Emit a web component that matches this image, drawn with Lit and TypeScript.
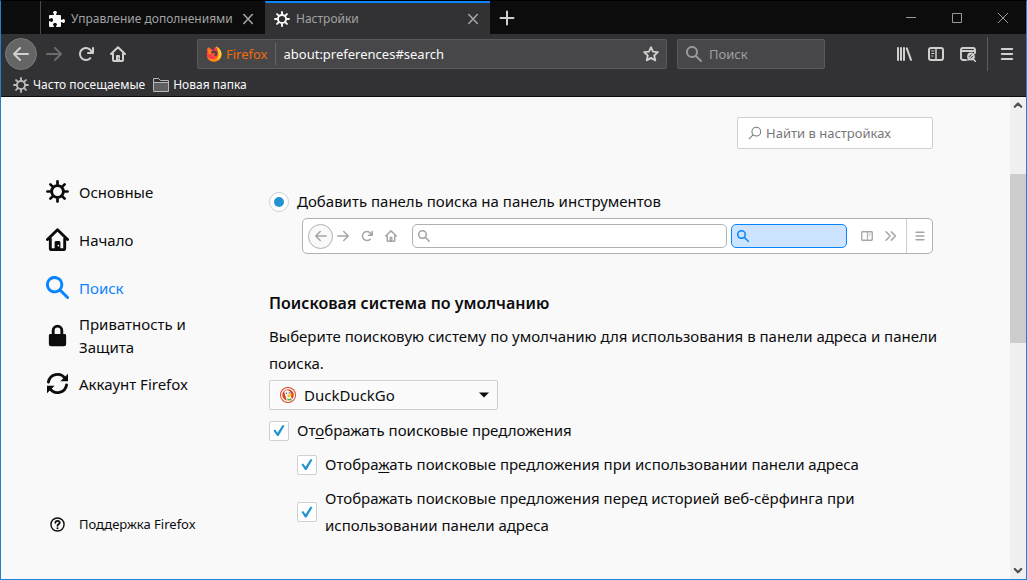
import { LitElement, html, css, svg, nothing } from "lit";
import { customElement, property, state } from "lit/decorators.js";

const line = (d: string, width = 2) => svg`<path d=${d} fill="none" stroke="currentColor"
  stroke-width=${width} stroke-linecap="round" stroke-linejoin="round"/>`;
const fill = (d: string) => svg`<path d=${d} fill="currentColor" fill-rule="evenodd"/>`;

const GLYPHS: Record<string, unknown> = {
  back: fill("M15 7H3.414l4.293-4.293a1 1 0 0 0-1.414-1.414l-6 6a1 1 0 0 0 0 1.414l6 6a1 1 0 0 0 1.414-1.414L3.414 9H15a1 1 0 0 0 0-2z"),
  forward: fill("M1 7h11.586L8.293 2.707a1 1 0 0 1 1.414-1.414l6 6a1 1 0 0 1 0 1.414l-6 6a1 1 0 0 1-1.414-1.414L12.586 9H1a1 1 0 0 1 0-2z"),
  reload: fill("M15 1a1 1 0 0 0-1 1v2.418A6.995 6.995 0 1 0 8 15a6.954 6.954 0 0 0 4.95-2.05 1 1 0 0 0-1.414-1.414A5.019 5.019 0 1 1 12.549 6H10a1 1 0 0 0 0 2h5a1 1 0 0 0 1-1V2a1 1 0 0 0-1-1z"),
  home: svg`${line("M1 8 8 1.2 15 8M3 7.5V14a1 1 0 0 0 1 1h8a1 1 0 0 0 1-1V7.500")}
    <path d="M6 15v-5a1 1 0 0 1 1-1h2a1 1 0 0 1 1 1v5z" fill="currentColor"/>
    <circle cx="8.600" cy="12.200" r=".6" class="hole"/>`,
  search: fill("M15.707 14.293l-4.822-4.822a6.019 6.019 0 1 0-1.414 1.414l4.822 4.822a1 1 0 0 0 1.414-1.414zM6 10a4 4 0 1 1 4-4 4 4 0 0 1-4 4z"),
  find: svg`<circle cx="9.500" cy="6.500" r="5" fill="none" stroke="currentColor" stroke-width="1.200"/>${line("M5.800 10.200 1.500 14.500", 1.2)}`,
  gear: svg`<circle cx="8" cy="8" r="4.100" fill="none" stroke="currentColor" stroke-width="2"/>
    ${line("M8 1v2M8 13v2M1 8h2M13 8h2M3.050 3.050l1.400 1.400M11.550 11.550l1.400 1.400M3.050 12.950l1.400-1.400M11.550 4.450l1.400-1.400", 1.9)}`,
  puzzle: fill("M14.5 8c-.971 0-1 1-1.750 1a.765.765 0 0 1-.75-.75V5a1 1 0 0 0-1-1H7.750A.765.765 0 0 1 7 3.250c0-.75 1-.779 1-1.750C8 .635 7.100 0 6 0S4 .635 4 1.500c0 .971 1 1 1 1.750a.765.765 0 0 1-.75.75H1a1 1 0 0 0-1 1v2.250A.765.765 0 0 0 .75 8c.75 0 .779-1 1.750-1C3.365 7 4 7.900 4 9s-.635 2-1.500 2c-.971 0-1-1-1.750-1a.765.765 0 0 0-.75.75V15a1 1 0 0 0 1 1h3.250a.765.765 0 0 0 .75-.75c0-.75-1-.779-1-1.750 0-.865.9-1.500 2-1.500s2 .635 2 1.500c0 .971-1 1-1 1.750a.765.765 0 0 0 .75.75H11a1 1 0 0 0 1-1v-3.250a.765.765 0 0 1 .75-.75c.75 0 .779 1 1.750 1 .865 0 1.500-.9 1.500-2s-.635-2-1.500-2z"),
  close: line("M3.800 3.500l8.500 9M12.300 3.500l-8.500 9", 1.6),
  plus: line("M8 1.500v13M1.500 8h13", 2),
  minimize: svg`<path d="M3 7.500h10" stroke="currentColor"/>`,
  maximize: svg`<path d="M3.500 3.500h9v9h-9z" fill="none" stroke="currentColor"/>`,
  quit: svg`<path d="M3 3l10 10M13 3 3 13" stroke="currentColor"/>`,
  star: line("M8 1.200l2 4.500 4.900.5-3.700 3.300 1.100 4.900L8 11.900l-4.300 2.500 1.100-4.900L1.100 6.200l4.900-.5z", 1.8),
  library: line("M2 2v12M5 2v12M8 2v12M10.800 2.400 15 13.800", 2),
  sidebar: svg`<rect x="1" y="2" width="14" height="12" rx="2" fill="none" stroke="currentColor" stroke-width="2"/>
    <path d="M8 2v12" stroke="currentColor" stroke-width="1.500"/><path d="M3.300 5h3M3.300 7.500h3M3.300 10h2" stroke="currentColor"/>`,
  panel: svg`<rect x="1" y="2.300" width="14" height="11.400" rx="1" fill="none" stroke="currentColor" stroke-width="1.800"/>
    <path d="M8.500 3v10" stroke="currentColor" stroke-width="1.400"/><path d="M10.300 5.500H13M10.300 7.800H12" stroke="currentColor"/>`,
  inspect: svg`${line("M6 14H3a2 2 0 0 1-2-2V4a2 2 0 0 1 2-2h10a2 2 0 0 1 2 2v3M1.500 5h13", 1.9)}
    <circle cx="11" cy="10.500" r="3.900" fill="currentColor"/>
    ${line("M8 14 10 12M13 13 15.300 15.300", 1.6)}
    <path d="M8.800 11 11.500 8.300M10.300 12.500 13 9.800" class="cut"/>`,
  menu: line("M2.800 3h10.400M2.800 8h10.400M2.800 13h10.400", 2),
  more: line("M1.500 2.500 7 8l-5.500 5.500M8.500 2.500 14 8l-5.500 5.500", 1.9),
  folder: svg`<path d="M.5 13.500v-12h5l2 2h8v11H.5zM.5 5.500h15" fill="none" stroke="currentColor"/>
    <path d="M1 6h14v8H1z" fill="currentColor" opacity=".35"/>`,
  lock: fill("M13 7h-1V4.500a4 4 0 0 0-8 0V7H3a1 1 0 0 0-1 1v6a1.500 1.500 0 0 0 1.500 1.500h9a1.500 1.500 0 0 0 1.500-1.500V8a1 1 0 0 0-1-1zM6 4.500a2 2 0 0 1 4 0V7H6z"),
  sync: svg`${line("M1.700 7a6.400 6.400 0 0 1 11.600-2.500M14.300 9a6.400 6.400 0 0 1-11.600 2.500", 2)}
    ${fill("M15.300 1.200v5.300H10zM.7 14.800V9.500H6z")}`,
  help: svg`<circle cx="8" cy="8" r="7" fill="none" stroke="currentColor" stroke-width="1.500"/>
    ${line("M5.800 6.200C5.800 3.300 10.300 3.400 10.300 6.100 10.300 7.800 8 7.700 8 9.400", 1.9)}<circle cx="8" cy="12" r="1.100" fill="currentColor"/>`,
  caret: fill("M3 5.500h10L8 10.500z"),
  up: line("M4.800 9.800 8 6.500l3.200 3.300", 2.2),
  down: line("M4.800 6 8 9.300 11.200 6", 2.2),
  firefox: svg`<circle cx="8" cy="8.300" r="7.300" fill="#ff3a4c"/>
    <path d="M10.300.3c1.800 1.200 5.300 4 5.200 8.400-.1 4-3.400 7-7.300 7C4 15.700 1.500 13 1 10c2 3 5 3.500 7.500 2.800C13 11.500 13.500 5.500 10.300.3z" fill="#ff8a16"/>
    <path d="M9.800.3c3 1.300 5.200 3.700 5.600 7.200.3 3.300-2 6-4.600 6.700C13.300 11 13.500 6 9.800.3z" fill="#ffd427"/>
    <path d="M1 3.500 2.300 1l1.600 2 2.700.6L5 5.500l.5 2L3 9z" fill="#ff7a1a"/>
    <circle cx="8.300" cy="7.500" r="3" fill="#474749"/><path d="M5 7.500 8 7l1.500 1-2 1.600 3.200.5C9 12.500 5.500 11.500 5 7.500z" fill="#ff5630"/>
    <path d="M4.500 0h4.800c-1 .8-1.300 1.900-.9 3.800L5.500 4z" fill="#474749"/>`,
  duck: svg`<circle cx="8" cy="8" r="8" fill="#d9431e"/><circle cx="8" cy="8" r="6.400" fill="#d9431e" stroke="#fff" stroke-width="1.300"/>
    <path d="M4.300 5c.8-2.400 5.200-2.500 6.200.6.300 1.200.3 2 .5 3.200l.8 3.700c-1.600 1.400-3.600 1.700-5 1.200z" fill="#fff"/>
    <circle cx="6.500" cy="6.200" r=".8" fill="#2d4f8e"/><circle cx="9.300" cy="5.900" r=".7" fill="#2d4f8e"/>
    <path d="M7.300 8.300c1-1 3-1.200 5-.8-.6 1-1.800 1.300-3.200 1.500l2 .8c-1 .7-3 .6-3.600-.1z" fill="#fdc20a"/>
    <path d="M7.300 11.300 9 12.100l2.200-.9v2.600l-1.800-.6-1.800.6z" fill="#3fae49"/>`,
};

@customElement("ui-icon")
export class UiIcon extends LitElement {
  @property() name = "";
  static styles = css`
    :host { display: block; flex: none; width: 16px; height: 16px; }
    .glyph { display: block; width: 100%; height: 100%; }
    .hole { fill: var(--icon-cut, #323234); }
    .cut { stroke: var(--icon-cut, #323234); fill: none; }
  `;
  render() {
    return html`<svg class="glyph" viewBox="0 0 16 16" aria-hidden="true">${GLYPHS[this.name] ?? nothing}</svg>`;
  }
}

@customElement("browser-chrome")
export class BrowserChrome extends LitElement {
  @state() private active = 1;
  private tabs = [
    { icon: "puzzle", title: "Управление дополнениями" },
    { icon: "gear", title: "Настройки" },
  ];
  static styles = css`
    :host { display: block; flex: none; background: #323234; color: #d0d0d1; border-bottom: 1px solid #0c0c0d; }
    button, input { font: inherit; color: inherit; background: none; border: 0; padding: 0; margin: 0; outline: 0; }
    .strip { display: flex; height: 33px; background: #0c0c0d; padding-left: 39px; }
    .tab { display: flex; align-items: center; flex: 0 1 225px; min-width: 80px; box-sizing: border-box;
      padding: 2px 9px 0 8px; border-left: 1px solid #4a4a4c; color: #a3a3a4; font-size: 12px; }
    .tab button { color: inherit; }
    .tab.active { background: #323234; border-left-color: #323234; border-top: 2px solid #0a84ff; padding-top: 0; }
    .title { display: flex; align-items: center; gap: 6px; flex: 1; min-width: 0; white-space: nowrap; overflow: hidden; }
    .title ui-icon { color: #f9f9fa; }
    .add { width: 34px; display: grid; place-items: center; }
    .window { display: flex; margin-left: auto; color: #9a9a9b; }
    .window button { width: 46px; display: grid; place-items: center; }
    .nav { display: flex; align-items: center; height: 40px; padding: 0 3px 0 4px; }
    .tool { width: 32px; height: 32px; display: grid; place-items: center; --icon-cut: #323234; }
    .round { box-sizing: border-box; border: 1px solid #7a7a7b; background: #656566; border-radius: 50%; margin-right: 1px; }
    .dim { color: #6c6c6d; }
    .spring { flex: 63 1 0; }
    .field { display: flex; align-items: center; box-sizing: border-box; height: 30px; background: #474749;
      border: 1px solid #5a5a5c; border-radius: 2px; font-size: 13px; }
    .url { flex: 453 1 0; padding: 0 7px 0 8px; min-width: 0; }
    .brand { color: #ef6c0d; padding: 0 7px 0 4px; border-right: 1px solid #5f6671; line-height: 22px; }
    .url input { flex: 1; min-width: 0; padding-left: 8px; color: #f9f9fa; }
    .find { width: 148px; gap: 7px; margin-left: 10px; padding: 0 8px; color: #97979a; }
    .find input { min-width: 0; flex: 1; }
    .find input::placeholder { color: #a0a0a2; opacity: 1; }
    .rule { width: 1px; height: 34px; margin: 0 3px; background: #5c5c5e; }
    .marks { display: flex; height: 22px; padding: 0 12px; gap: 8px; font-size: 12px; color: #f9f9fa; }
    .marks button { display: flex; align-items: center; gap: 4px; padding-bottom: 1px; white-space: nowrap; }
    .marks ui-icon { color: #b8b8b9; }
  `;
  render() {
    return html`
      <div class="strip">
        ${this.tabs.map((tab, i) => html`
          <div class="tab ${i === this.active ? "active" : ""}">
            <button class="title" @click=${() => (this.active = i)}><ui-icon name=${tab.icon}></ui-icon><span>${tab.title}</span></button>
            <button aria-label="Закрыть"><ui-icon name="close"></ui-icon></button>
          </div>`)}
        <button class="add" aria-label="Новая вкладка"><ui-icon name="plus"></ui-icon></button>
        <div class="window">
          <button aria-label="Свернуть"><ui-icon name="minimize"></ui-icon></button>
          <button aria-label="Развернуть"><ui-icon name="maximize"></ui-icon></button>
          <button aria-label="Закрыть окно"><ui-icon name="quit"></ui-icon></button>
        </div>
      </div>
      <div class="nav">
        <button class="tool round" aria-label="Назад"><ui-icon name="back"></ui-icon></button>
        <button class="tool dim" aria-label="Вперёд"><ui-icon name="forward"></ui-icon></button>
        <button class="tool" aria-label="Обновить"><ui-icon name="reload"></ui-icon></button>
        <button class="tool" aria-label="Домой"><ui-icon name="home"></ui-icon></button>
        <div class="spring"></div>
        <div class="field url">
          <ui-icon name="firefox"></ui-icon><span class="brand">Firefox</span>
          <input aria-label="Адрес" .value=${"about:preferences#search"} />
          <button aria-label="В закладки"><ui-icon name="star"></ui-icon></button>
        </div>
        <div class="field find"><ui-icon name="search"></ui-icon><input aria-label="Поиск" placeholder="Поиск" /></div>
        <div class="spring"></div>
        <button class="tool" aria-label="Библиотека"><ui-icon name="library"></ui-icon></button>
        <button class="tool" aria-label="Боковая панель"><ui-icon name="sidebar"></ui-icon></button>
        <button class="tool" aria-label="Инспектор"><ui-icon name="inspect"></ui-icon></button>
        <div class="rule"></div>
        <button class="tool" aria-label="Меню"><ui-icon name="menu"></ui-icon></button>
      </div>
      <div class="marks">
        <button><ui-icon name="gear"></ui-icon>Часто посещаемые</button>
        <button><ui-icon name="folder"></ui-icon>Новая папка</button>
      </div>`;
  }
}

@customElement("pref-sidebar")
export class PrefSidebar extends LitElement {
  private items = [
    { icon: "gear", label: "Основные", href: "#general" },
    { icon: "home", label: "Начало", href: "#home" },
    { icon: "search", label: "Поиск", href: "#search" },
    { icon: "lock", label: "Приватность и Защита", href: "#privacy" },
    { icon: "sync", label: "Аккаунт Firefox", href: "#sync" },
  ];
  static styles = css`
    :host { display: flex; flex-direction: column; flex: none; box-sizing: border-box; width: 268px;
      padding: 71px 60px 31px 45px; --icon-cut: #f9f9fa; }
    .list { display: flex; flex-direction: column; }
    .item { display: flex; align-items: center; gap: 10px; height: 48px; color: #0c0c0d;
      text-decoration: none; font-size: 15px; line-height: 23px; }
    .item ui-icon { width: 23px; height: 23px; margin-bottom: 2px; }
    .item.current { color: #0a84ff; }
    .help { margin-top: auto; height: 48px; font-size: 13px; }
    .help ui-icon { width: 15px; height: 15px; margin: 0 4px; }
  `;
  render() {
    return html`
      <nav class="list">
        ${this.items.map((it) => html`<a class="item ${it.href === "#search" ? "current" : ""}" href=${it.href}>
          <ui-icon name=${it.icon}></ui-icon><span>${it.label}</span></a>`)}
      </nav>
      <a class="item help" href="#help"><ui-icon name="help"></ui-icon><span>Поддержка Firefox</span></a>`;
  }
}

@customElement("toolbar-preview")
export class ToolbarPreview extends LitElement {
  static styles = css`
    :host { display: flex; align-items: center; box-sizing: border-box; height: 36px; border: 1px solid #b1b1b3;
      border-radius: 5px; background: #fff; color: #a5a5a7; padding-left: 5px; --icon-cut: #fff; }
    ui-icon { width: 12px; height: 12px; }
    .slot { width: 24px; display: grid; place-items: center; }
    .disc { box-sizing: border-box; width: 25px; height: 25px; margin-right: -2px; border: 1px solid #b1b1b3;
      border-radius: 50%; background: #f9f9fa; }
    .box { display: flex; align-items: center; box-sizing: border-box; height: 24px; padding-left: 5px;
      border: 1px solid #b1b1b3; border-radius: 5px; }
    .address { flex: 308 1 0; margin-left: 9px; }
    .query { flex: 109 1 0; margin: 0 8px 0 4px; background: #cce4ff; border-color: #0a84ff; color: #0a84ff; }
    .end { height: 100%; width: 25px; margin-left: 3px; border-left: 1px solid #d0d0d2; }
  `;
  render() {
    return html`
      <span class="slot disc"><ui-icon name="back"></ui-icon></span>
      <span class="slot"><ui-icon name="forward"></ui-icon></span>
      <span class="slot"><ui-icon name="reload"></ui-icon></span>
      <span class="slot"><ui-icon name="home"></ui-icon></span>
      <span class="box address"><ui-icon name="search"></ui-icon></span>
      <span class="box query"><ui-icon name="search"></ui-icon></span>
      <span class="slot"><ui-icon name="panel"></ui-icon></span>
      <span class="slot"><ui-icon name="more"></ui-icon></span>
      <span class="slot end"><ui-icon name="menu"></ui-icon></span>`;
  }
}

@customElement("search-pane")
export class SearchPane extends LitElement {
  static styles = css`
    :host { display: flex; flex-direction: column; flex: 0 1 664px; min-width: 0; padding-top: 20px;
      font-size: 15px; line-height: 27px; color: #0c0c0d; }
    .filter { display: flex; align-items: center; align-self: flex-end; box-sizing: border-box; gap: 4px; width: 196px;
      height: 32px; padding: 0 10px; border: 1px solid #d0d0d3; border-radius: 2px; background: #fff; color: #7b7b7d; }
    .filter ui-icon { width: 14px; height: 14px; }
    .filter input { flex: 1; min-width: 0; border: 0; padding: 0; background: none; font: inherit; font-size: 13px; outline: 0; }
    .filter input::placeholder { color: #77777a; opacity: 1; }
    .row { display: flex; align-items: center; gap: 8px; }
    .mode { margin-top: 39px; }
    input[type="radio"], input[type="checkbox"] { appearance: none; flex: none; box-sizing: border-box; width: 20px; height: 20px;
      margin: 0; border: 1px solid #d0d0d3; background: #fff; display: grid; place-items: center; }
    input[type="radio"] { border-radius: 50%; }
    input[type="checkbox"] { border-radius: 2px; }
    input[type="radio"]:checked::before { content: ""; width: 10px; height: 10px; border-radius: 50%; background: #2292d0; }
    input[type="checkbox"]:checked::before { content: ""; width: 12px; height: 12px; background: #2292d0;
      clip-path: polygon(4% 50%, 18% 42%, 38% 68%, 80% 4%, 96% 10%, 46% 96%, 34% 96%); }
    toolbar-preview { margin: 3px 0 0 33px; }
    h2 { margin: 36px 0 6px; font-size: 16px; line-height: 27px; font-weight: 600; }
    p { margin: 0 -16px 0 0; }
    .engine { display: grid; align-items: center; align-self: flex-start; width: 229px; margin: 3px 0 7px; }
    .engine > * { grid-area: 1 / 1; }
    .engine select { appearance: none; box-sizing: border-box; width: 100%; height: 30px; padding: 0 30px 0 34px; font: inherit;
      line-height: 27px; color: inherit; background: #fbfbfb; border: 1px solid #d0d0d3; border-radius: 2px; }
    .engine ui-icon { pointer-events: none; z-index: 1; }
    .logo { margin-left: 11px; }
    .arrow { justify-self: end; margin-right: 6px; }
    .sub { margin: 7px 0 0 28px; }
    u { text-underline-offset: 2px; }
  `;
  render() {
    return html`
      <label class="filter"><ui-icon name="find"></ui-icon><input aria-label="Найти в настройках" placeholder="Найти в настройках" /></label>
      <label class="row mode"><input type="radio" name="mode" checked /><span>Добавить панель поиска на панель инструментов</span></label>
      <toolbar-preview></toolbar-preview>
      <h2>Поисковая система по умолчанию</h2>
      <p>Выберите поисковую систему по умолчанию для использования в панели адреса и панели поиска.</p>
      <div class="engine">
        <select aria-label="Поисковая система по умолчанию"><option>DuckDuckGo</option></select>
        <ui-icon class="logo" name="duck"></ui-icon><ui-icon class="arrow" name="caret"></ui-icon>
      </div>
      <label class="row"><input type="checkbox" checked /><span>От<u>о</u>бражать поисковые предложения</span></label>
      <label class="row sub"><input type="checkbox" checked /><span>Отобра<u>ж</u>ать поисковые предложения при использовании панели адреса</span></label>
      <label class="row sub"><input type="checkbox" checked /><span>Отображать поисковые предложения перед историей веб-сёрфинга при использовании панели адреса</span></label>`;
  }
}

@customElement("app-root")
export class AppRoot extends LitElement {
  static styles = css`
    :host { display: flex; flex-direction: column; box-sizing: border-box; min-height: 100vh; background: #f9f9fa;
      border: 1px solid #1883d7; border-top-color: #000; font-family: "Noto Sans", "Open Sans", sans-serif; }
    .page { display: flex; flex: 1; }
    .content { display: flex; flex: 1; min-width: 0; padding-right: 76px; }
    .scroll { display: flex; flex-direction: column; flex: none; width: 16px; background: #f0f0f0; color: #505050; }
    .track { flex: 1; display: grid; grid-template-rows: 61fr 169fr 220fr; }
    .thumb { grid-row: 2; background: #cdcdcd; }
  `;
  render() {
    return html`
      <browser-chrome></browser-chrome>
      <div class="page">
        <div class="content"><pref-sidebar></pref-sidebar><search-pane></search-pane></div>
        <div class="scroll"><ui-icon name="up"></ui-icon><div class="track"><div class="thumb"></div></div><ui-icon name="down"></ui-icon></div>
      </div>`;
  }
}
